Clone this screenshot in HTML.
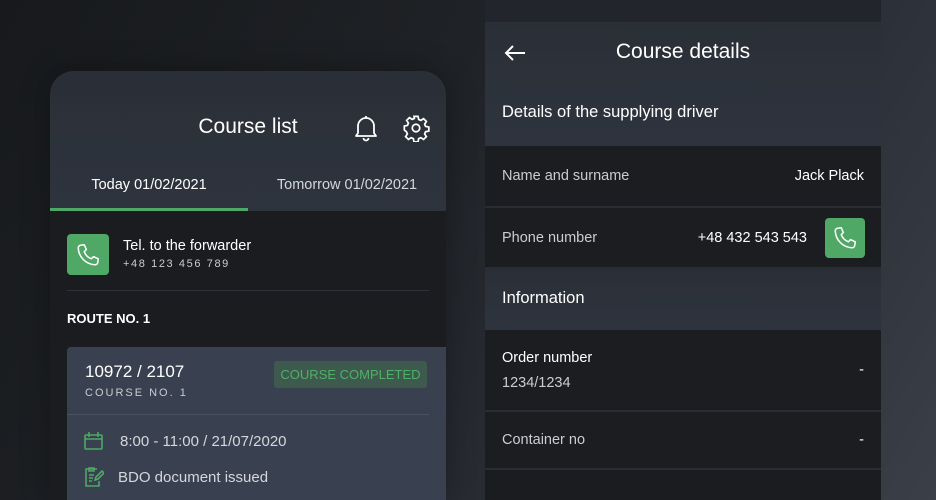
<!DOCTYPE html>
<html><head><meta charset="utf-8"><style>
*{margin:0;padding:0;box-sizing:border-box}
html,body{width:936px;height:500px;overflow:hidden}
body{position:relative;font-family:"Liberation Sans",sans-serif;background:linear-gradient(120deg,#17191c 0%,#1f2226 40%,#2d3139 75%,#3a3f48 100%);color:#fff}
.abs{position:absolute}
.lp{left:50px;top:71px;width:396px;height:429px;border-radius:24px 24px 0 0;overflow:hidden;background:#1b1c20;box-shadow:0 0 30px rgba(0,0,0,.3)}
.hdr{background:linear-gradient(180deg,#2a2f37,#2e343e);}
.rp{left:485px;top:0;width:396px;height:500px;background:#1b1c20;overflow:hidden}
.green{background:#4fa865;border-radius:4px}
.row{position:absolute;left:0;width:396px;background:#1c1d21;border-bottom:2px solid #2a2d33}
.lbl{position:absolute;left:17px;font-size:14.5px;color:#c9ccd1}
.val{position:absolute;right:17px;font-size:14.5px;color:#fff}
</style></head><body>
<div class="abs lp">
  <div class="hdr abs" style="left:0;top:0;width:396px;height:140px"></div>
  <div class="abs" style="left:0;top:0;width:396px;height:25px;background:#2a2e36"></div>
  <div class="abs" style="left:0;top:44px;width:396px;text-align:center;font-size:21px">Course list</div>
  <svg class="abs" style="left:303px;top:43px" width="26" height="28" viewBox="0 0 26 28" fill="none" stroke="#fff" stroke-width="1.8" stroke-linejoin="round"><path d="M5 19V12a8 8 0 0 1 16 0v7l2 3H3z"/><path d="M13 2v2M10.5 24a2.5 2.5 0 0 0 5 0"/></svg>
  <svg class="abs" style="left:352px;top:43px" width="28" height="28" viewBox="0 0 24 24" fill="none" stroke="#fff" stroke-width="1.5"><circle cx="12" cy="12" r="3.2"/><path d="M10.3 2h3.4l.6 2.7 1.9.8 2.3-1.5 2.4 2.4-1.5 2.3.8 1.9 2.8.6v3.4l-2.8.6-.8 1.9 1.5 2.3-2.4 2.4-2.3-1.5-1.9.8-.6 2.8h-3.4l-.6-2.8-1.9-.8-2.3 1.5-2.4-2.4 1.5-2.3-.8-1.9L2 13.7v-3.4l2.7-.6.8-1.9L4 5.5l2.4-2.4 2.3 1.5 1.9-.8z"/></svg>
  <div class="abs" style="left:0;top:106px;width:198px;text-align:center;font-size:14.5px">Today 01/02/2021</div>
  <div class="abs" style="left:198px;top:106px;width:198px;text-align:center;font-size:14.5px;color:#d4d7dc">Tomorrow 01/02/2021</div>
  <div class="abs" style="left:0;top:137px;width:198px;height:3px;background:#4fa865"></div>
  <div class="abs green" style="left:17px;top:163px;width:42px;height:41px"></div>
  <svg class="abs" style="left:25px;top:171px" width="26" height="26" viewBox="0 0 24 24" fill="none" stroke="#fff" stroke-width="1.4" stroke-linejoin="round"><path d="M5 3l3.5-.5 2 4.5-2 1.8a11 11 0 0 0 6.7 6.7l1.8-2 4.5 2L21 19c-.3 1.2-1.5 2-2.7 2C10 20.5 3.5 14 3 5.7 3 4.5 3.8 3.3 5 3z"/></svg>
  <div class="abs" style="left:73px;top:167px;font-size:14.5px">Tel. to the forwarder</div>
  <div class="abs" style="left:73px;top:187px;font-size:11px;letter-spacing:1.6px;color:#c9ccd1">+48 123 456 789</div>
  <div class="abs" style="left:17px;top:219px;width:362px;height:1px;background:#2e3138"></div>
  <div class="abs" style="left:17px;top:240px;font-size:13px;font-weight:bold">ROUTE NO. 1</div>
  <div class="abs" style="left:17px;top:276px;width:379px;height:200px;background:#394150;border-radius:4px 0 0 0"></div>
  <div class="abs" style="left:35px;top:291px;font-size:17px">10972 / 2107</div>
  <div class="abs" style="left:35px;top:316px;font-size:11px;letter-spacing:2px;color:#c9ccd1">COURSE NO. 1</div>
  <div class="abs" style="left:224px;top:290px;width:153px;height:27px;background:#3e5a4e;border-radius:3px;color:#4fb066;font-size:13px;text-align:center;line-height:27px">COURSE COMPLETED</div>
  <div class="abs" style="left:17px;top:343px;width:362px;height:1px;background:#4a5261"></div>
  <svg class="abs" style="left:34px;top:361px" width="19" height="18" viewBox="0 0 19 18" fill="none" stroke="#4fa865" stroke-width="1.6"><rect x="1" y="3" width="17" height="14" rx="1"/><path d="M1 7h17M5 0v5M14 0v5"/></svg>
  <div class="abs" style="left:70px;top:362px;font-size:15px;color:#d4d7dc">8:00 - 11:00 / 21/07/2020</div>
  <svg class="abs" style="left:34px;top:396px" width="20" height="20" viewBox="0 0 20 20" fill="none" stroke="#4fa865" stroke-width="1.6"><path d="M13 2H2v17h13v-5M5 1h5v3H5zM5 8h5M5 11h4M5 14h3M11 13l1-3 6-6 2 2-6 6z"/></svg>
  <div class="abs" style="left:68px;top:398px;font-size:15px;color:#d4d7dc">BDO document issued</div>
</div>
<div class="abs rp">
  <div class="abs" style="left:0;top:0;width:396px;height:22px;background:#22252b"></div>
  <div class="hdr abs" style="left:0;top:22px;width:396px;height:124px"></div>
  <svg class="abs" style="left:19px;top:44px" width="22" height="18" viewBox="0 0 22 18" fill="none" stroke="#fff" stroke-width="2"><path d="M21 9H2M9 2L2 9l7 7"/></svg>
  <div class="abs" style="left:0;top:40px;width:396px;text-align:center;font-size:21px">Course details</div>
  <div class="abs" style="left:17px;top:103px;font-size:16.5px">Details of the supplying driver</div>
  <div class="row" style="top:146px;height:62px"><span class="lbl" style="top:22px">Name and surname</span><span class="val" style="top:22px">Jack Plack</span></div>
  <div class="row" style="top:208px;height:61px"><span class="lbl" style="top:22px">Phone number</span><span class="val" style="top:22px;right:74px">+48 432 543 543</span>
    <div class="abs green" style="left:340px;top:10px;width:40px;height:40px"></div>
    <svg class="abs" style="left:347px;top:17px" width="26" height="26" viewBox="0 0 24 24" fill="none" stroke="#fff" stroke-width="1.4" stroke-linejoin="round"><path d="M5 3l3.5-.5 2 4.5-2 1.8a11 11 0 0 0 6.7 6.7l1.8-2 4.5 2L21 19c-.3 1.2-1.5 2-2.7 2C10 20.5 3.5 14 3 5.7 3 4.5 3.8 3.3 5 3z"/></svg></div>
  <div class="hdr abs" style="left:0;top:269px;width:396px;height:61px"></div>
  <div class="abs" style="left:17px;top:289px;font-size:16.5px">Information</div>
  <div class="row" style="top:330px;height:82px"><span class="lbl" style="top:20px;color:#fff">Order number</span><span class="lbl" style="top:45px">1234/1234</span><span class="val" style="top:32px">-</span></div>
  <div class="row" style="top:412px;height:58px"><span class="lbl" style="top:20px">Container no</span><span class="val" style="top:20px">-</span></div>
</div>
</body></html>
